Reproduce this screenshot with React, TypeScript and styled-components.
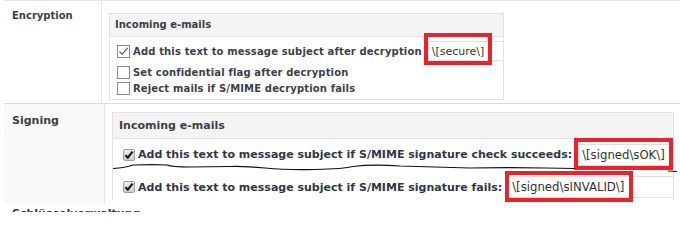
import React from 'react';
import styled, { createGlobalStyle, css } from 'styled-components';

type Size = 'small' | 'large';

type OptionProps = {
  size: Size;
  label: string;
  checked?: boolean;
  value?: string;
  mark?: { left: number; top: number; width: number; height: number };
  height: number;
  marginTop?: number;
};

const fontSize = (size: Size) => (size === 'small' ? '10px' : '11px');
const inputFontSize = (size: Size) => (size === 'small' ? '11px' : '11.7px');

const GlobalStyle = createGlobalStyle`
  html, body {
    margin: 0;
    padding: 0;
    background: #fff;
  }
  body {
    font-family: "DejaVu Sans", Verdana, sans-serif;
    color: #3a3f4b;
  }
`;

const CheckIcon: React.FC<{ size: Size }> = ({ size }) =>
  size === 'small' ? (
    <svg width="11" height="11" viewBox="0 0 11 11">
      <polyline
        points="1.5,5.5 4.2,8.3 9.6,1.8"
        fill="none"
        stroke="#4a4a4a"
        strokeWidth="1.1"
      />
    </svg>
  ) : (
    <svg width="10" height="10" viewBox="0 0 10 10">
      <polyline
        points="1.4,5.2 3.8,7.6 8.6,1.6"
        fill="none"
        stroke="#1a1a1a"
        strokeWidth="2.2"
      />
    </svg>
  );

const Option: React.FC<OptionProps> = ({
  size,
  label,
  checked,
  value,
  mark,
  height,
  marginTop,
}: OptionProps): JSX.Element => (
  <Row $size={size} $height={height} $marginTop={marginTop || 0}>
    <Checkbox $size={size}>{checked ? <CheckIcon size={size} /> : null}</Checkbox>
    <OptionLabel $size={size}>{label}</OptionLabel>
    {value !== undefined ? (
      <InputWrap $size={size}>
        <TextInput $size={size} readOnly value={value} />
        {mark ? (
          <Mark
            style={{
              left: mark.left,
              top: mark.top,
              width: mark.width,
              height: mark.height,
            }}
          />
        ) : null}
      </InputWrap>
    ) : null}
  </Row>
);

const App: React.FC = () => (
  <>
    <GlobalStyle />
    <Page>
      <SettingTable $size="small">
        <LabelCell $size="small">Encryption</LabelCell>
        <ContentCell $size="small">
          <Fieldset $size="small">
            <Legend $size="small">Incoming e-mails</Legend>
            <Option
              size="small"
              checked
              label="Add this text to message subject after decryption"
              value="\[secure\]"
              mark={{ left: -4, top: -8, width: 68, height: 32 }}
              height={20}
              marginTop={4}
            />
            <Option
              size="small"
              label="Set confidential flag after decryption"
              height={16}
              marginTop={3}
            />
            <Option
              size="small"
              label="Reject mails if S/MIME decryption fails"
              height={16}
            />
          </Fieldset>
        </ContentCell>
      </SettingTable>

      <SettingTable $size="large">
        <LabelCell $size="large">Signing</LabelCell>
        <ContentCell $size="large">
          <Fieldset $size="large">
            <Legend $size="large">Incoming e-mails</Legend>
            <Option
              size="large"
              checked
              label="Add this text to message subject if S/MIME signature check succeeds:"
              value="\[signed\sOK\]"
              mark={{ left: -4, top: -6, width: 99, height: 32 }}
              height={31}
            />
            <Option
              size="large"
              checked
              label="Add this text to message subject if S/MIME signature fails:"
              value="\[signed\sINVALID\]"
              mark={{ left: -3, top: -5, width: 128, height: 31 }}
              height={34}
            />
          </Fieldset>
        </ContentCell>
      </SettingTable>

      <FooterLink>Schlüsselverwaltung</FooterLink>

      <Scribble width="680" height="212" viewBox="0 0 680 212">
        <path
          d="M113 168.5 C120 168 126 167.5 133 165 C145 164.5 160 164.5 167 165 C172 167 180 167 190 167 L230 166.5 C245 166 255 167 265 168 C280 169.5 295 170 315 169.5 C335 169 345 168.5 353 166.5 C365 165 385 165 400 166 C420 166.5 445 167.5 470 168 C495 167.5 520 167.5 545 168 L575 168.5"
          fill="none"
          stroke="#111"
          strokeWidth="1.2"
        />
        <path d="M668 171 L677 171.5" fill="none" stroke="#111" strokeWidth="1.2" />
      </Scribble>
    </Page>
  </>
);

const Page = styled.div`
  position: relative;
  width: 680px;
  height: 212px;
  overflow: hidden;
`;

const SettingTable = styled.div<{ $size: Size }>`
  display: flex;
  margin-left: 4px;
  width: 676px;
  box-sizing: border-box;

  ${(p) =>
    p.$size === 'small'
      ? css`
          height: 104px;
          border-top: 1px solid #e6e6e6;
          border-bottom: 1px solid #dcdcdc;
        `
      : css`
          height: 99px;
        `}
`;

const LabelCell = styled.div<{ $size: Size }>`
  box-sizing: border-box;
  flex: none;
  padding-left: 8px;
  font-weight: bold;
  font-size: ${(p) => fontSize(p.$size)};
  line-height: 12px;
  color: #3a3f4b;

  ${(p) =>
    p.$size === 'small'
      ? css`
          width: 98px;
          padding-top: 9px;
          border-right: 1px solid #e6e6e6;
          background: #fff;
        `
      : css`
          width: 101px;
          padding-top: 11px;
          border-right: 1px solid #e3e3e3;
          background: #f9f9f9;
        `}
`;

const ContentCell = styled.div<{ $size: Size }>`
  flex: 1;
  min-width: 0;
  padding-left: 7px;
  padding-top: ${(p) => (p.$size === 'small' ? '12px' : '8px')};
`;

const Fieldset = styled.div<{ $size: Size }>`
  box-sizing: border-box;
  display: flex;
  flex-direction: column;
  border: 1px solid #e2e2e2;

  ${(p) =>
    p.$size === 'small'
      ? css`
          width: 395px;
          height: 87px;
        `
      : css`
          width: 562px;
          height: 88px;
          border-bottom: none;
        `}
`;

const Legend = styled.div<{ $size: Size }>`
  flex: none;
  background: #f4f4f4;
  border-bottom: 1px solid #e2e2e2;
  font-weight: bold;
  font-size: ${(p) => fontSize(p.$size)};
  height: ${(p) => (p.$size === 'small' ? '22px' : '25px')};
  line-height: ${(p) => (p.$size === 'small' ? '22px' : '25px')};
  padding-left: ${(p) => (p.$size === 'small' ? '5px' : '6px')};
  color: #3a3f4b;
`;

const Row = styled.div<{ $size: Size; $height: number; $marginTop: number }>`
  flex: none;
  display: flex;
  align-items: center;
  height: ${(p) => p.$height}px;
  margin-top: ${(p) => p.$marginTop}px;
  padding-left: ${(p) => (p.$size === 'small' ? '7px' : '10px')};
`;

const Checkbox = styled.span<{ $size: Size }>`
  flex: none;
  box-sizing: border-box;
  display: flex;
  align-items: center;
  justify-content: center;
  margin-right: 3px;

  ${(p) =>
    p.$size === 'small'
      ? css`
          width: 13px;
          height: 13px;
          border: 1px solid #8c8c8c;
          background: #fff;
        `
      : css`
          width: 12px;
          height: 12px;
          border: 1px solid #a0a0a0;
          border-radius: 2px;
          background: linear-gradient(#ececec, #cfcfcf);
        `}
`;

const OptionLabel = styled.span<{ $size: Size }>`
  flex: none;
  white-space: nowrap;
  font-weight: bold;
  font-size: ${(p) => fontSize(p.$size)};
  letter-spacing: ${(p) => (p.$size === 'small' ? '0.15px' : '0')};
  color: ${(p) => (p.$size === 'small' ? '#3a3f4b' : '#303746')};
`;

const InputWrap = styled.div<{ $size: Size }>`
  position: relative;
  flex: 1;
  min-width: 0;
  margin-left: 6px;
`;

const TextInput = styled.input<{ $size: Size }>`
  display: block;
  box-sizing: border-box;
  width: 100%;
  margin: 0;
  padding: 0 3px;
  border: 1px solid #dedede;
  border-right: none;
  outline: none;
  background: #fff;
  font-family: "DejaVu Sans", Verdana, sans-serif;
  font-size: ${(p) => inputFontSize(p.$size)};
  color: #333;
  height: ${(p) => (p.$size === 'small' ? '20px' : '22px')};
`;

const Mark = styled.span`
  position: absolute;
  box-sizing: border-box;
  border: 4px solid #e8232b;
  pointer-events: none;
`;

const FooterLink = styled.div`
  margin-top: 4px;
  padding-left: 12px;
  font-size: 11px;
  font-weight: bold;
  line-height: 13px;
  color: #333a48;
`;

const Scribble = styled.svg`
  position: absolute;
  left: 0;
  top: 0;
  pointer-events: none;
`;

export default App;
